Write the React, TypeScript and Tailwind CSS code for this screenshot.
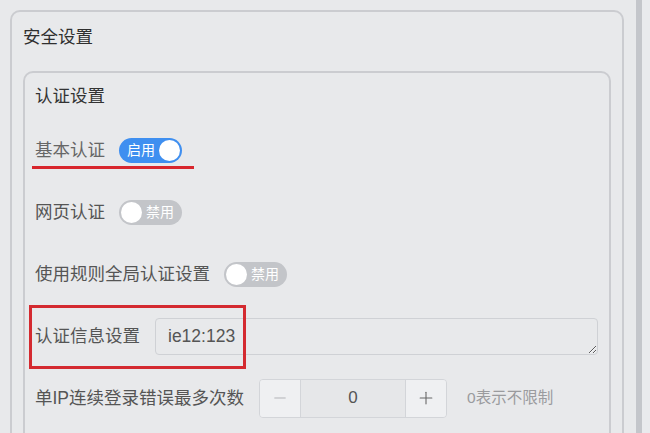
import React from "react";
import { Minus, Plus } from "lucide-react";

const font = "font-['Liberation_Sans','Noto_Sans_CJK_SC',sans-serif]";

function Toggle({ on, label }: { on: boolean; label: string }) {
  return (
    <div
      className={`relative ml-[14px] flex h-[25px] w-[63px] shrink-0 items-center rounded-full ${
        on ? "bg-[#3f8ff0] justify-start pl-[8px]" : "bg-[#c3c5c9] justify-end pr-[8px]"
      }`}
    >
      <span className="text-[14px] leading-[25px] text-white">{label}</span>
      <span
        className={`absolute top-[2px] h-[21px] w-[21px] rounded-full bg-white ${
          on ? "right-[2px]" : "left-[2px]"
        }`}
      />
    </div>
  );
}

export default function App() {
  return (
    <div className={`flex h-[433px] w-[650px] overflow-hidden bg-[#e8e9eb] ${font}`}>
      <div className="ml-[10px] mt-[10px] w-[614px] shrink-0">
        <div className="rounded-[10px] border-2 border-[#cbccd0] px-[11px] pb-[40px]">
          <div className="pt-[13px] text-[17.5px] leading-[24px] text-[#2f2f2f]">安全设置</div>
          <div className="mt-[22px] rounded-[10px] border-2 border-[#cbccd0] pl-[10px] pr-[11px] pb-[40px]">
            <div className="pt-[11px] text-[17.5px] leading-[24px] text-[#333]">认证设置</div>
            <div className="mt-[11px] flex flex-col text-[17.5px] leading-[24px] text-[#555]">
              <div className="relative flex h-[62px] items-center">
                <span className="text-[#666]">基本认证</span>
                <Toggle on label="启用" />
                <div className="absolute left-[-3px] top-[47px] h-[3px] w-[162px] bg-[#d8262d]" />
              </div>
              <div className="flex h-[62px] items-center">
                <span>网页认证</span>
                <Toggle on={false} label="禁用" />
              </div>
              <div className="flex h-[62px] items-center">
                <span>使用规则全局认证设置</span>
                <Toggle on={false} label="禁用" />
              </div>
              <div className="relative flex h-[62px] items-center">
                <span className="w-[120px] shrink-0">认证信息设置</span>
                <textarea
                  readOnly
                  defaultValue="ie12:123"
                  className="h-[37px] min-w-0 flex-1 rounded-[4px] border border-[#cfd1d5] bg-transparent px-[12px] py-[7px] text-[17.5px] leading-[21px] text-[#555] outline-none"
                />
                <div className="pointer-events-none absolute left-[-6px] top-0 h-[64px] w-[217px] border-[3px] border-[#d42a30]" />
              </div>
              <div className="flex h-[62px] items-center">
                <span className="shrink-0">单IP连续登录错误最多次数</span>
                <div className="ml-[15px] flex h-[39px] w-[188px] shrink-0 overflow-hidden rounded-[4px] border border-[#d3d5d9]">
                  <div className="flex w-[41px] items-center justify-center border-r border-[#d3d5d9] bg-[#eff0f2] text-[#b0b2b6]">
                    <Minus size={18} strokeWidth={1.3} />
                  </div>
                  <div className="flex flex-1 items-center justify-center bg-[#e6e7e9] text-[17px] text-[#555]">0</div>
                  <div className="flex w-[41px] items-center justify-center border-l border-[#d3d5d9] bg-[#eff0f2] text-[#666]">
                    <Plus size={20} strokeWidth={1.3} />
                  </div>
                </div>
                <span className="ml-[20px] text-[15.5px] text-[#9a9b9e]">0表示不限制</span>
              </div>
            </div>
          </div>
        </div>
      </div>
      <div className="ml-[12px] h-full w-[6px] shrink-0 bg-[#c4c6cb]" />
      <div className="h-full flex-1 bg-[#e9eaed]" />
    </div>
  );
}
